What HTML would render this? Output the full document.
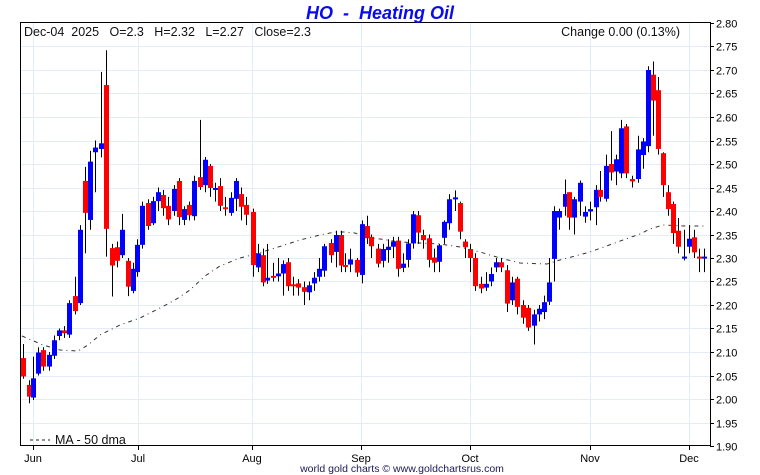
<!DOCTYPE html>
<html><head><meta charset="utf-8"><style>
html,body{margin:0;padding:0;background:#fff;width:760px;height:475px;overflow:hidden}
svg{display:block}
text{font-family:"Liberation Sans",sans-serif}
</style></head><body>
<svg id="c" width="760" height="475" xmlns="http://www.w3.org/2000/svg">
<g id="grid" stroke="#e2edf7" stroke-width="1"></g>
<g id="ma"></g>
<g id="candles"></g>
<rect x="20.5" y="22.5" width="690" height="423" fill="none" stroke="#000" stroke-width="1"/>
<g id="axis" font-size="11" fill="#000"></g>
<text x="380" y="19" font-size="18" font-weight="bold" font-style="italic" fill="#0a0aee" text-anchor="middle" xml:space="preserve">HO  -  Heating Oil</text>
<text x="24" y="36" font-size="12.5" fill="#111" xml:space="preserve">Dec-04  2025   O=2.3   H=2.32   L=2.27   Close=2.3</text>
<text x="680" y="36" font-size="12.5" fill="#111" text-anchor="end">Change 0.00 (0.13%)</text>
<line x1="30" y1="440" x2="50" y2="440" stroke="#222" stroke-dasharray="3,3"/>
<text x="55" y="444" font-size="12.5" fill="#111">MA - 50 dma</text>
<text x="402" y="472" font-size="10.5" fill="#1a1a5a" text-anchor="middle">world gold charts © www.goldchartsrus.com</text>
</svg>
<script>
var NS="http://www.w3.org/2000/svg";
function Y(p){return 23+(2.80-p)*470;}
function el(t,a,parent){var e=document.createElementNS(NS,t);for(var k in a)e.setAttribute(k,a[k]);document.getElementById(parent).appendChild(e);return e;}
for(var i=1;i<18;i++){var p=2.80-i*0.05;var y=Math.round(Y(p))+0.5;el("line",{x1:21,x2:710,y1:y,y2:y},"grid");}
var months=[["Jun",33],["Jul",138],["Aug",252],["Sep",361],["Oct",470],["Nov",590],["Dec",689]];
months.forEach(function(m){el("line",{x1:m[1]+0.5,x2:m[1]+0.5,y1:23,y2:445},"grid");
 el("line",{x1:m[1]+0.5,x2:m[1]+0.5,y1:446,y2:450,stroke:"#000"},"axis");
 var t=el("text",{x:m[1],y:462,"text-anchor":"middle","font-size":"11"},"axis");t.textContent=m[0];});
for(var i=0;i<=18;i++){var p=2.80-i*0.05;var y=Math.round(Y(p))+0.5;
 el("line",{x1:710,x2:714,y1:y,y2:y,stroke:"#000"},"axis");
 var t=el("text",{x:716,y:y+4,"font-size":"11"},"axis");t.textContent=p.toFixed(2);}
var ma=[[22,336],[43,345],[60,350],[78,351],[88,345],[100,335],[120,325],[140,318],[160,308],[175,300],[190,290],[205,276],[220,266],[240,258],[252,255],[275,248],[300,240],[320,235],[335,232],[345,232],[355,233],[365,237],[380,239],[400,242],[420,243],[440,244],[460,247],[480,252],[500,258],[520,263],[547,264],[560,260],[590,252],[623,240],[640,234],[650,229],[663,225],[685,226],[705,226]];
el("polyline",{points:ma.map(function(p){return p.join(",")}).join(" "),fill:"none",stroke:"#333","stroke-width":"1","stroke-dasharray":"4,4,1,4"},"ma");
var d=[
[23.2,2.087,2.048,2.117,2.043],[28.5,2.03,2.005,2.04,1.991],[33.3,2.003,2.044,2.09,1.998],[38.3,2.054,2.099,2.11,2.05],[43.3,2.104,2.069,2.11,2.06],
[49.2,2.069,2.094,2.10,2.06],[54.2,2.092,2.125,2.135,2.085],[59.2,2.134,2.146,2.15,2.125],[64.3,2.146,2.14,2.155,2.13],[69.3,2.137,2.204,2.21,2.13],
[75.2,2.219,2.187,2.26,2.18],[80.2,2.204,2.36,2.37,2.20],[85,2.464,2.396,2.494,2.31],[90,2.381,2.505,2.528,2.36],[95.3,2.525,2.535,2.55,2.44],
[101.3,2.532,2.544,2.696,2.514],[106.3,2.668,2.362,2.742,2.303],[111.5,2.321,2.284,2.33,2.218],[116.7,2.323,2.294,2.335,2.28],[121.5,2.306,2.36,2.394,2.30],
[127.5,2.294,2.239,2.30,2.219],[132.5,2.23,2.277,2.29,2.225],[137.3,2.27,2.328,2.34,2.26],[142.3,2.328,2.411,2.42,2.32],[148,2.417,2.368,2.425,2.36],
[153.3,2.374,2.421,2.43,2.37],[158.3,2.421,2.44,2.45,2.40],[163.3,2.434,2.406,2.445,2.39],[168.3,2.411,2.382,2.43,2.37],[174,2.40,2.447,2.455,2.39],
[179,2.464,2.387,2.47,2.37],[184,2.381,2.404,2.41,2.37],[189,2.413,2.391,2.42,2.38],[194.3,2.389,2.464,2.475,2.38],[200.3,2.472,2.451,2.594,2.445],
[205.3,2.455,2.509,2.515,2.44],[210.3,2.496,2.449,2.50,2.43],[215.3,2.447,2.449,2.46,2.42],[220.3,2.453,2.411,2.47,2.40],[225.3,2.408,2.404,2.43,2.39],
[231,2.396,2.428,2.44,2.39],[236,2.426,2.464,2.47,2.40],[241,2.436,2.409,2.45,2.38],[246,2.413,2.392,2.43,2.37],[252.5,2.398,2.285,2.405,2.26],
[257.7,2.28,2.31,2.33,2.27],[262.5,2.306,2.248,2.32,2.24],[267.3,2.252,2.258,2.33,2.245],[272.8,2.262,2.261,2.29,2.25],[278.3,2.261,2.267,2.30,2.25],
[283.3,2.267,2.287,2.295,2.22],[288.3,2.291,2.24,2.30,2.23],[293.3,2.244,2.24,2.26,2.22],[298.3,2.246,2.237,2.255,2.22],[304.3,2.238,2.228,2.25,2.20],
[309.3,2.227,2.242,2.25,2.21],[314.3,2.246,2.258,2.27,2.23],[319.3,2.26,2.277,2.30,2.25],[324.3,2.273,2.325,2.33,2.26],[330.5,2.332,2.306,2.34,2.29],
[335.5,2.313,2.349,2.358,2.28],[340.5,2.349,2.284,2.358,2.27],[345.3,2.285,2.282,2.31,2.27],[350.3,2.286,2.297,2.32,2.27],[356.5,2.296,2.269,2.30,2.26],
[361.5,2.264,2.372,2.38,2.246],[366.5,2.368,2.342,2.39,2.33],[371.3,2.345,2.325,2.35,2.30],[377.5,2.32,2.288,2.33,2.28],[382.5,2.294,2.319,2.33,2.28],
[387.5,2.317,2.324,2.34,2.29],[392.5,2.324,2.335,2.345,2.30],[397.7,2.337,2.277,2.345,2.26],[403.3,2.279,2.288,2.31,2.27],[408.3,2.296,2.331,2.34,2.28],
[413.3,2.331,2.393,2.40,2.32],[418.3,2.391,2.354,2.40,2.33],[423.3,2.349,2.338,2.36,2.32],[429,2.342,2.296,2.35,2.28],[434.3,2.301,2.29,2.32,2.27],
[439.3,2.292,2.327,2.33,2.27],[444.3,2.343,2.377,2.38,2.33],[449.3,2.374,2.425,2.436,2.36],[455.3,2.427,2.429,2.444,2.40],[460.3,2.417,2.356,2.42,2.34],
[465.3,2.335,2.323,2.34,2.30],[470.3,2.319,2.30,2.33,2.27],[475.3,2.30,2.24,2.31,2.23],[481,2.245,2.235,2.26,2.225],[486,2.237,2.245,2.27,2.23],
[491.3,2.25,2.266,2.28,2.24],[496.3,2.28,2.291,2.30,2.27],[501.3,2.291,2.28,2.30,2.27],[507,2.274,2.203,2.285,2.185],[512.3,2.21,2.248,2.26,2.20],
[517.3,2.256,2.196,2.26,2.18],[522.5,2.20,2.173,2.21,2.16],[527.5,2.194,2.152,2.20,2.145],[533.5,2.156,2.18,2.19,2.116],[538.5,2.18,2.192,2.20,2.165],
[543.5,2.185,2.206,2.22,2.17],[548.5,2.207,2.248,2.30,2.20],[553.7,2.298,2.40,2.41,2.25],[559,2.386,2.40,2.405,2.36],[564.5,2.409,2.436,2.467,2.39],
[569.3,2.44,2.386,2.44,2.36],[574.3,2.386,2.425,2.43,2.35],[579.5,2.42,2.46,2.465,2.39],[585.3,2.388,2.398,2.41,2.375],[590.3,2.399,2.404,2.42,2.38],
[595.5,2.408,2.445,2.455,2.37],[600.3,2.445,2.43,2.485,2.42],[606.3,2.426,2.496,2.52,2.42],[611.3,2.50,2.482,2.57,2.465],[616.3,2.484,2.51,2.52,2.455],
[621.3,2.48,2.576,2.594,2.47],[626.3,2.58,2.48,2.585,2.47],[632.3,2.468,2.463,2.475,2.45],[637.7,2.468,2.531,2.56,2.46],[642.7,2.519,2.548,2.555,2.49],
[647.7,2.538,2.70,2.708,2.525],[652.7,2.69,2.635,2.718,2.56],[658.3,2.657,2.532,2.685,2.52],[663.3,2.523,2.455,2.525,2.43],[668.3,2.44,2.404,2.455,2.39],
[673.3,2.415,2.353,2.42,2.33],[678.3,2.358,2.324,2.385,2.31],[684.3,2.30,2.303,2.36,2.295],[689.3,2.324,2.341,2.37,2.31],[694.3,2.344,2.312,2.36,2.30],
[699.3,2.303,2.30,2.32,2.27],[704.3,2.30,2.303,2.32,2.27]
];
d.forEach(function(c){var x=c[0],o=c[1],cl=c[2],h=c[3],l=c[4];
 var xr=Math.round(x);
 el("line",{x1:xr+0.5,x2:xr+0.5,y1:Y(h),y2:Y(l),stroke:"#000","stroke-width":"1"},"candles");
 var top=Y(Math.max(o,cl)),bot=Y(Math.min(o,cl));var hgt=Math.max(bot-top,2);
 el("rect",{x:xr-2,y:top,width:5,height:hgt,fill:cl>=o?"#0000ff":"#ff0000"},"candles");
});
</script>
</body></html>
